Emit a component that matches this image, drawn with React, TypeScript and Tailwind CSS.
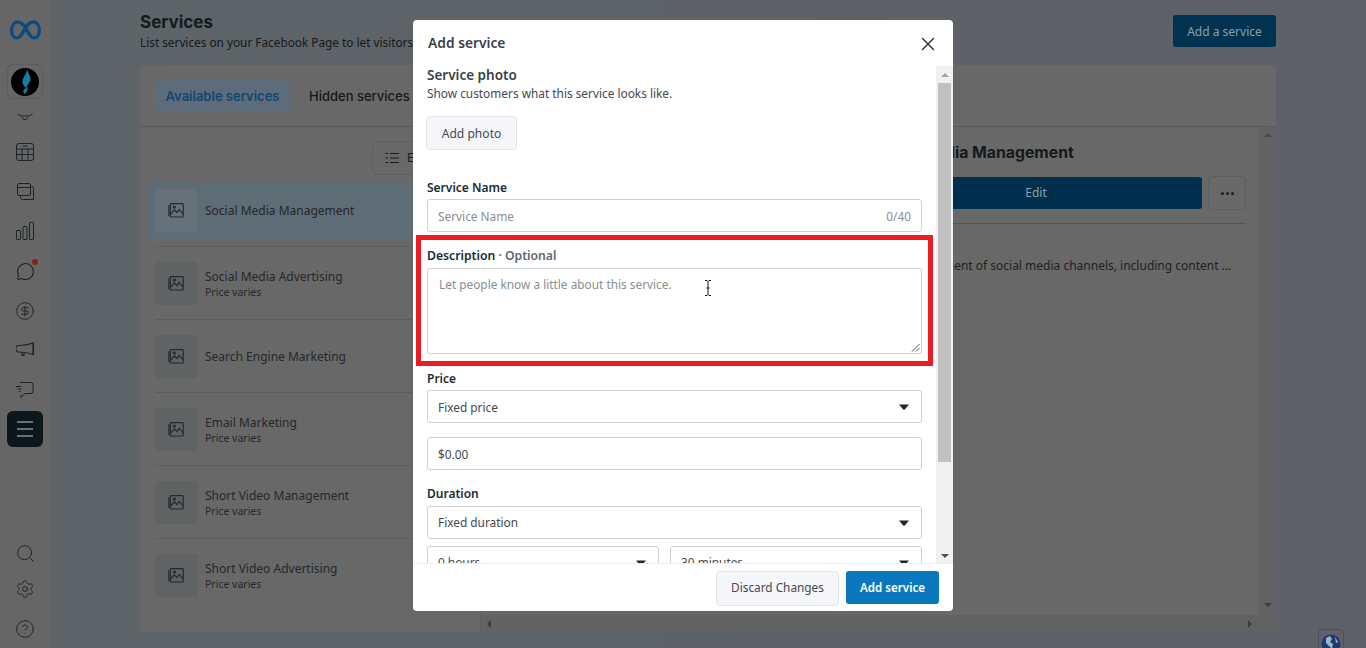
import { CircleDollarSign, CircleHelp, MessageCircle, Search, Settings, X } from "lucide-react";

const services = [
  { name: "Social Media Advertising", price: "Price varies" },
  { name: "Search Engine Marketing" },
  { name: "Email Marketing", price: "Price varies" },
  { name: "Short Video Management", price: "Price varies" },
  { name: "Short Video Advertising", price: "Price varies" },
];

function PhotoIcon() {
  return (
    <svg width="17" height="17" viewBox="0 0 16 16" fill="none" stroke="#24282b" strokeWidth="1.100">
      <path d="M3 1.500h10.500a.8.8 0 0 1 .8.8v11a.8.8 0 0 1-.8.8H3a.8.8 0 0 1-.8-.8v-11a.8.8 0 0 1 .8-.8z" />
      <path d="M.8 3v10.500" />
      <path d="M2.500 11.500l3.500-4 2.500 2.500 2-3 3.500 4" />
      <circle cx="6" cy="4.800" r="1" />
    </svg>
  );
}

function ServiceRow({ name, price }: { name: string; price?: string }) {
  return (
    <div className="mx-[15px] flex h-[73px] items-center gap-[7px] border-t border-[#5a5d66]">
      <div className="flex h-[43px] w-[43px] shrink-0 items-center justify-center rounded bg-[#5f6364]">
        <PhotoIcon />
      </div>
      <div className="min-w-0 pt-[2px]">
        <p className="text-[12px] leading-[16px] text-[#25282b]">{name}</p>
        {price && <p className="text-[10.5px] leading-[14px] text-[#25282b]">{price}</p>}
      </div>
    </div>
  );
}

function Sidebar() {
  const cls = "text-[#1d2428]";
  return (
    <aside className="flex h-[648px] w-[50px] shrink-0 flex-col items-center overflow-hidden bg-[#666666]">
      <svg className="mt-[20px] shrink-0" width="31" height="20" viewBox="0 0 31 20" fill="none" stroke="#0b4a85" strokeWidth="3.200">
        <path d="M15.500 7.500C13 3.800 10.600 1.800 7.600 1.800 3.900 1.800 1.700 5.600 1.700 10.600c0 4.400 2 7.400 5 7.400 3 0 4.900-2.400 8.800-10.500C18 3.800 20.400 1.800 23.400 1.800c3.700 0 5.900 3.800 5.900 8.800 0 4.400-2 7.400-5 7.400-3 0-4.900-2.400-8.800-10.500z" />
      </svg>
      <div className="mt-[24px] flex h-[35px] w-[36px] shrink-0 items-center justify-center rounded-md border border-[#5c5c5c]">
        <div className="flex h-[28px] w-[28px] items-center justify-center rounded-full bg-black">
          <svg width="12" height="26" viewBox="0 0 12 26" fill="#137ea3">
            <path d="M8 0c.5 3 3.500 6 3.500 10 0 3.500-3 5-4.500 9-1.800-1.500-3.500-3.500-3.500-6.500C3.500 8 8 5 8 0zM5 20.500c1.500-.8 2.500-1.800 3.500-3 .8 2.500-.5 6-3 7.500-1.500-1-1.500-3.500-.5-4.500z" />
          </svg>
        </div>
      </div>
      <svg className="mt-[14px] shrink-0" width="16" height="8" viewBox="0 0 16 8" fill="none" stroke="#1d2428" strokeWidth="1">
        <path d="M.5 1c3 2 4 2 7.500 2s4.500 0 7.500-2M5 3.500c0 4 6 4 6 0" />
      </svg>
      <svg className="mt-[22px] shrink-0" width="18" height="18" viewBox="0 0 18 18" fill="none" stroke="#1d2428" strokeWidth="1">
        <rect x=".5" y=".5" width="17" height="17" rx="2.500" />
        <path d="M.5 6h17M.5 11.500h17M6 6v11.500M12 6v11.500M6.500 3h5" />
      </svg>
      <svg className="mt-[22px] shrink-0" width="17" height="17" viewBox="0 0 17 17" fill="none" stroke="#1d2428" strokeWidth="1">
        <path d="M.5 2a1.500 1.500 0 0 1 1.500-1.500h10a1.500 1.500 0 0 1 1.500 1.500v9a1.500 1.500 0 0 1-1.500 1.500H2a1.500 1.500 0 0 1-1.500-1.500zM.5 4.500h13M3.500 12.500v2a2 2 0 0 0 2 2h11v-11a2 2 0 0 0-2-2h-1" />
      </svg>
      <svg className="mt-[22px] shrink-0" width="18" height="18" viewBox="0 0 18 18" fill="none" stroke="#1d2428" strokeWidth="1">
        <rect x=".5" y="8.500" width="4" height="9" rx=".6" />
        <rect x="7" y="4.500" width="4" height="13" rx=".6" />
        <rect x="13.500" y=".5" width="4" height="17" rx=".6" />
      </svg>
      <div className="relative mt-[22px] shrink-0">
        <MessageCircle size={19} strokeWidth={1.300} className={cls} />
        <span className="absolute -right-[3px] -top-[3px] h-[6px] w-[6px] rounded-full bg-[#8f1a26]" />
      </div>
      <CircleDollarSign size={20} strokeWidth={1.100} className={`mt-[20px] shrink-0 ${cls}`} />
      <svg className="mt-[21px] shrink-0" width="19" height="15" viewBox="0 0 19 15" fill="none" stroke="#1d2428" strokeWidth="1.200">
        <path d="M17 1 C12 3 8 3.500 3 3.500a2.500 2.500 0 0 0 0 6.500c5 0 9 .5 14 2.500zM17.500 .5v12.500M6 10v3.500h2v-3" />
      </svg>
      <svg className="mt-[25px] shrink-0" width="18" height="17" viewBox="0 0 18 17" fill="none" stroke="#1d2428" strokeWidth="1">
        <path d="M4 .5h11a2 2 0 0 1 2 2v7a2 2 0 0 1-2 2H9l-4 4v-3M0 4.500h5M1.500 7h3.500M3 9.500h1.500" />
      </svg>
      <div className="mt-[12px] flex h-[36px] w-[36px] shrink-0 flex-col items-center justify-center gap-[5px] rounded-md bg-[#0c171b]">
        <span className="h-[2px] w-[16px] bg-[#6b6f70]" />
        <span className="h-[2px] w-[16px] bg-[#6b6f70]" />
        <span className="h-[2px] w-[16px] bg-[#6b6f70]" />
      </div>
      <div className="flex-1" />
      <Search size={21} strokeWidth={1.100} className={`shrink-0 ${cls}`} />
      <Settings size={20} strokeWidth={1.100} className={`mt-[15px] shrink-0 ${cls}`} />
      <CircleHelp size={20} strokeWidth={1.100} className={`mb-[9px] mt-[20px] shrink-0 ${cls}`} />
    </aside>
  );
}

function Caret() {
  return (
    <svg width="10" height="6" viewBox="0 0 10 6" fill="#1c2b33">
      <path d="M0 .5h10L6 5.200q-1 1-2 0z" />
    </svg>
  );
}

function SelectBox({ label, className, raised }: { label: string; className: string; raised?: boolean }) {
  return (
    <div className={`flex h-[33px] items-center justify-between rounded-[3px] border border-[#ced0d4] pl-[10px] pr-[12px] text-[11.85px] text-[#444950] ${className}`}>
      <span className={raised ? "" : "pt-[2px]"}>{label}</span>
      <Caret />
    </div>
  );
}

function Modal() {
  return (
    <div className="absolute left-[413px] top-[20px] flex h-[591px] w-[540px] flex-col overflow-hidden rounded bg-white">
      <div className="flex h-[46px] shrink-0 items-center justify-between pl-[15px] pr-[14px] pt-[1px]">
        <h2 className="text-[13.8px] font-semibold text-[#3a4148]">Add service</h2>
        <X size={22} strokeWidth={1.700} className="text-[#3a4148]" />
      </div>
      <div className="flex min-h-0 flex-1">
        <div className="relative min-w-0 flex-1 overflow-hidden pl-[14px] pr-[14px]">
          <h3 className="text-[13.5px] font-semibold leading-[18px] text-[#3a4148]">Service photo</h3>
          <p className="pt-[1px] text-[11.85px] leading-[17px] text-[#444950]">Show customers what this service looks like.</p>
          <button className="-ml-[1px] mt-[14px] flex h-[34px] w-[91px] items-center justify-center rounded border border-[#e2e5ea] bg-[#f5f6f9] pt-[2px] text-[12.1px] text-[#444950]">
            Add photo
          </button>
          <p className="mt-[30px] text-[12px] font-semibold leading-[16px] text-[#1c2b33]">Service Name</p>
          <div className="mt-[3px] flex h-[33px] items-center justify-between rounded-[3px] border border-[#ced0d4] px-[10px] pt-[2px] text-[11.85px] text-[#8a8d91]">
            <span>Service Name</span>
            <span>0/40</span>
          </div>
          <div className="-mx-[11px] mt-[3px] h-[131px] border-[5px] border-[#ed1c24] px-[6px] pt-[7px]">
            <p className="text-[12.2px] font-semibold leading-[18px] text-[#1c2b33]">
              Description <span className="text-[#606770]">· Optional</span>
            </p>
            <div className="relative mt-[3px] h-[86px] rounded-[3px] border border-[#ced0d4] px-[11px] pt-[7px] text-[11.85px] leading-[16px] text-[#8a8d91]">
              Let people know a little about this service.
              <svg className="absolute bottom-[1px] right-[1px]" width="9" height="9" viewBox="0 0 9 9" stroke="#555" strokeWidth="1">
                <path d="M1 8.500L8.500 1M5 8.500L8.500 5" />
              </svg>
              <svg className="absolute left-[276px] top-[11px]" width="8" height="16" viewBox="0 0 8 16" fill="none" stroke="#111" strokeWidth="1">
                <path d="M1 .5h2l1 1 1-1h2M4 1.500v13M1 15.500h2l1-1 1 1h2M2.500 8h3" />
              </svg>
            </div>
          </div>
          <p className="mt-[5px] text-[12px] font-semibold leading-[16px] text-[#1c2b33]">Price</p>
          <SelectBox label="Fixed price" className="mt-[3px]" />
          <div className="mt-[14px] flex h-[33px] items-center rounded-[3px] border border-[#ced0d4] pl-[10px] pt-[2px] text-[11.85px] text-[#444950]">
            $0.00
          </div>
          <p className="mt-[16px] text-[12px] font-semibold leading-[16px] text-[#1c2b33]">Duration</p>
          <SelectBox label="Fixed duration" className="mt-[4px]" raised />
          <div className="mt-[7px] flex gap-[11px]">
            <SelectBox label="0 hours" className="w-[232px] shrink-0" raised />
            <SelectBox label="30 minutes" className="flex-1" raised />
          </div>
        </div>
        <div className="flex w-[17px] shrink-0 flex-col items-center bg-[#f1f1f1]">
          <div className="mt-[7px] h-0 w-0 border-x-[4px] border-b-[4px] border-x-transparent border-b-[#a3a3a3]" />
          <div className="mt-[6px] h-[379px] w-[13px] bg-[#c1c1c1]" />
          <div className="mt-auto mb-[5px] h-0 w-0 border-x-[4px] border-t-[4px] border-x-transparent border-t-[#505050]" />
        </div>
      </div>
      <div className="flex h-[48px] shrink-0 items-start justify-end gap-[7px] border-t border-[#eeeeee] pr-[14px] pt-[7px]">
        <button className="flex h-[35px] w-[123px] items-center justify-center rounded border border-[#e2e5ea] bg-[#f5f6f9] pb-[1px] text-[11.8px] text-[#444950]">
          Discard Changes
        </button>
        <button className="flex h-[33px] w-[93px] items-center justify-center rounded-[3px] bg-[#0a78be] pt-[1px] text-[11.6px] font-semibold text-white">
          Add service
        </button>
      </div>
    </div>
  );
}

export default function App() {
  return (
    <div className="relative flex h-[648px] w-[1366px] overflow-hidden bg-gradient-to-r from-[#5e6568] via-[#5d6266] to-[#5f6068] font-['Noto_Sans',sans-serif]">
      <Sidebar />
      <main className="min-w-0 flex-1 pl-[90px] pr-[90px]">
        <header className="flex h-[65px] items-start justify-between">
          <div className="pt-[10px]">
            <h1 className="font-['Inter',sans-serif] text-[17px] font-bold leading-[24px] text-[#16191c]">Services</h1>
            <p className="text-[11.8px] leading-[16px] text-[#16191c]">List services on your Facebook Page to let visitors</p>
          </div>
          <button className="mt-[15px] flex h-[32px] w-[103px] items-center justify-center rounded-[3px] bg-[#003352] pt-[1px] text-[12px] text-[#8aa0ac]">
            Add a service
          </button>
        </header>
        <section className="flex h-[567px] flex-col rounded bg-[#686868]">
          <div className="flex h-[62px] shrink-0 items-center gap-[19px] border-b border-[#5a5a5a] px-[15px] pt-[1px]">
            <span className="flex h-[32px] w-[135px] items-center justify-center rounded-md bg-[#5d6c7a] pt-[2px] font-['Inter',sans-serif] text-[13px] font-semibold text-[#12476e]">
              Available services
            </span>
            <span className="pt-[1px] font-['Inter',sans-serif] text-[13px] font-medium text-[#16191c]">Hidden services</span>
          </div>
          <div className="flex min-h-0 flex-1">
            <div className="w-[341px] shrink-0 border-r border-[#5d5d5d]">
              <div className="pl-[232px] pt-[14px]">
                <button className="flex h-[34px] w-[100px] items-center gap-[8px] rounded-md border border-[#5d5f60] pl-[12px] text-[12px] text-[#1a1c1e]">
                  <svg width="14" height="12" viewBox="0 0 14 12" fill="none" stroke="#1a1c1e" strokeWidth="1.200">
                    <path d="M5 1.500h9M5 6h9M5 10.500h9M.5 1.500h2.500M.5 6h2.500M.5 10.500h2.500" />
                  </svg>
                  Edit
                </button>
              </div>
              <div className="mx-[8px] mt-[6px] flex h-[58px] items-center gap-[7px] rounded bg-[#5e6c76] pl-[7px]">
                <div className="flex h-[43px] w-[43px] shrink-0 items-center justify-center rounded bg-[#66727b]">
                  <PhotoIcon />
                </div>
                <p className="pt-[2px] text-[12px] text-[#25282b]">Social Media Management</p>
              </div>
              <div className="h-[7px]" />
              {services.map((s) => (
                <ServiceRow key={s.name} name={s.name} price={s.price} />
              ))}
            </div>
            <div className="flex min-w-0 flex-1 flex-col">
              <div className="flex min-h-0 flex-1">
                <div className="min-w-0 flex-1 pl-[389px] pr-[13px] pt-[16px]">
                  <h2 className="whitespace-nowrap font-['Inter',sans-serif] text-[15.8px] font-bold leading-[20px] text-[#16191c]">Social Media Management</h2>
                  <div className="mt-[13px] flex items-center gap-[6px]">
                    <button className="flex h-[32px] flex-1 items-center justify-center rounded-[3px] bg-[#00304e] text-[12px] text-[#8aa0ac]">Edit</button>
                    <button className="flex h-[34px] w-[38px] items-center justify-center rounded border border-[#5d5f60] text-[#1a1c1e]">
                      <span className="flex gap-[2px]">
                        <i className="h-[3px] w-[3px] rounded-full bg-[#1a1c1e]" />
                        <i className="h-[3px] w-[3px] rounded-full bg-[#1a1c1e]" />
                        <i className="h-[3px] w-[3px] rounded-full bg-[#1a1c1e]" />
                      </span>
                    </button>
                  </div>
                  <div className="mt-[13px] border-t border-[#565656]" />
                  <p className="ml-[27px] mt-[34px] whitespace-nowrap text-[12px] leading-[16px] text-[#1f2224]">Management of social media channels, including content ...</p>
                  <p className="mt-[35px] text-[12px] leading-[16px] text-[#1f2224]">Service details</p>
                </div>
                <div className="flex w-[17px] shrink-0 flex-col items-center bg-[#626262]">
                  <div className="mt-[6px] h-0 w-0 border-x-[4px] border-b-[4px] border-x-transparent border-b-[#4a4a4a]" />
                  <div className="mt-auto mb-[8px] h-0 w-0 border-x-[4px] border-t-[4px] border-x-transparent border-t-[#3c3c3c]" />
                </div>
              </div>
              <div className="flex h-[17px] shrink-0 items-center justify-between bg-[#626262] pl-[6px]">
                <div className="h-0 w-0 border-y-[4px] border-r-[4px] border-y-transparent border-r-[#3c3c3c]" />
                <div className="mr-[24px] h-0 w-0 border-y-[4px] border-l-[4px] border-y-transparent border-l-[#3c3c3c]" />
              </div>
            </div>
          </div>
        </section>
      </main>
      <div className="absolute left-[1318px] top-[629px] flex h-[30px] w-[26px] justify-center rounded-t border border-[#4e5157] pt-[4px]">
        <svg width="20" height="20" viewBox="0 0 20 20">
          <circle cx="10" cy="10" r="9.500" fill="#1f3a6e" />
          <path d="M5 4l4-2 2 3-2 3 3 2-1 5-3-3-3-3zM14 3l3 5-2 1z" fill="#9fb0c9" />
        </svg>
      </div>
      <Modal />
    </div>
  );
}
